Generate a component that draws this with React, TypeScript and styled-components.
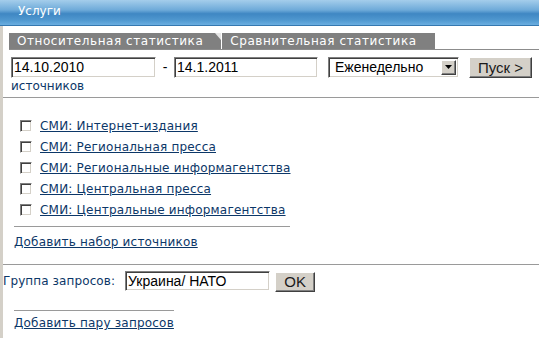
import styled, { createGlobalStyle } from 'styled-components';

const GlobalStyle = createGlobalStyle`
  body {
    margin: 0;
    background: #ffffff;
    font-family: "DejaVu Sans", Verdana, sans-serif;
    font-size: 12px;
  }
`;

const sources = [
  'СМИ: Интернет-издания',
  'СМИ: Региональная пресса',
  'СМИ: Региональные информагентства',
  'СМИ: Центральная пресса',
  'СМИ: Центральные информагентства',
];

export default function App() {
  return (
    <>
      <GlobalStyle />
      <Page>
        <Header>Услуги</Header>
        <Content>
          <TabBar>
            <Tab $corner>Относительная статистика</Tab>
            <Tab>Сравнительная статистика</Tab>
          </TabBar>

          <DateRow>
            <TextInput $width={145} defaultValue="14.10.2010" />
            <Dash>-</Dash>
            <TextInput $width={144} defaultValue="14.1.2011" />
            <Select>
              <SelectValue>Еженедельно</SelectValue>
              <SelectArrow>
                <svg width="7" height="4" viewBox="0 0 7 4">
                  <polygon points="0,0 7,0 3.5,4" fill="#000" />
                </svg>
              </SelectArrow>
            </Select>
            <Button $width={63}>Пуск &gt;</Button>
          </DateRow>

          <Caption>источников</Caption>
          <Divider $top={3} />

          <SourceList>
            {sources.map((s) => (
              <SourceRow key={s}>
                <Checkbox />
                <LinkText href="#">{s}</LinkText>
              </SourceRow>
            ))}
          </SourceList>
          <ShortRule $width={276} $top={6} />
          <AddLink href="#" $top={8}>Добавить набор источников</AddLink>

          <Divider $top={14} />

          <QueryRow>
            <Label>Группа запросов:</Label>
            <TextInput $width={145} $height={20} defaultValue="Украина/ НАТО" />
            <Button $width={40} $height={20} $left={5}>OK</Button>
          </QueryRow>
          <ShortRule $width={160} $top={18} />
          <AddLink href="#" $top={5}>Добавить пару запросов</AddLink>
        </Content>
      </Page>
    </>
  );
}

const Page = styled.div`
  width: 539px;
  height: 338px;
  overflow: hidden;
`;

const Header = styled.div`
  height: 25px;
  border-bottom: 1px solid #3578b0;
  padding-left: 18px;
  line-height: 23px;
  font-size: 12px;
  color: #ffffff;
  background: linear-gradient(
    #a4cdeb 0%,
    #6eaad9 40%,
    #3f87c3 55%,
    #4f97cf 80%,
    #6aaee0 100%
  );
`;

const Content = styled.div`
  border-left: 3px solid #d4d0c8;
  height: 312px;
  padding-top: 7px;
`;

const TabBar = styled.div`
  display: flex;
  margin-left: 6px;
  border-bottom: 1px solid #8c8c8c;
`;

const Tab = styled.div<{ $corner?: boolean }>`
  position: relative;
  height: 16px;
  line-height: 17px;
  padding: 0 18px 0 8px;
  margin-right: ${(p) => (p.$corner ? '1px' : '0')};
  background: #808080;
  color: #ffffff;
  font-size: 12px;
  letter-spacing: 0.55px;
  white-space: nowrap;

  &::after {
    content: '';
    display: ${(p) => (p.$corner ? 'block' : 'none')};
    position: absolute;
    top: 0;
    right: 0;
    width: 0;
    height: 0;
    border-top: 7px solid #e6e6e6;
    border-left: 6px solid transparent;
  }
`;

const DateRow = styled.div`
  display: flex;
  align-items: center;
  margin: 6px 0 0 8px;
  height: 22px;
`;

const TextInput = styled.input<{ $width: number; $height?: number }>`
  box-sizing: border-box;
  width: ${(p) => p.$width}px;
  height: ${(p) => p.$height ?? 21}px;
  padding: 0 0 0 2px;
  margin: 0;
  border: 1px solid;
  border-color: #808080 #ffffff #ffffff #808080;
  box-shadow: inset 1px 1px 0 #404040, inset -1px -1px 0 #d4d0c8;
  font-family: "Liberation Sans", Arial, sans-serif;
  font-size: 14px;
  color: #000000;
  outline: none;
`;

const Dash = styled.span`
  width: 18px;
  text-align: center;
  font-family: "Liberation Sans", Arial, sans-serif;
  font-size: 14px;
`;

const Select = styled.div`
  box-sizing: border-box;
  display: flex;
  align-items: center;
  width: 131px;
  height: 21px;
  margin-left: 10px;
  border: 1px solid;
  border-color: #808080 #ffffff #ffffff #808080;
  box-shadow: inset 1px 1px 0 #404040, inset -1px -1px 0 #d4d0c8;
  padding: 2px;
`;

const SelectValue = styled.span`
  flex: 1;
  padding-left: 4px;
  font-family: "Liberation Sans", Arial, sans-serif;
  font-size: 14px;
`;

const SelectArrow = styled.span`
  box-sizing: border-box;
  display: flex;
  align-items: center;
  justify-content: center;
  width: 15px;
  height: 15px;
  background: #d4d0c8;
  border: 1px solid;
  border-color: #ffffff #404040 #404040 #ffffff;
  box-shadow: inset -1px -1px 0 #808080;
`;

const Button = styled.button<{ $width: number; $height?: number; $left?: number }>`
  box-sizing: border-box;
  width: ${(p) => p.$width}px;
  height: ${(p) => p.$height ?? 21}px;
  margin: 1px 0 0 ${(p) => p.$left ?? 10}px;
  padding: 0;
  background: #d4d0c8;
  border: 1px solid;
  border-color: #ffffff #404040 #404040 #ffffff;
  box-shadow: inset -1px -1px 0 #808080;
  font-family: "Liberation Sans", Arial, sans-serif;
  font-size: 15px;
  font-weight: 400;
  color: #1a1a1a;
`;

const Caption = styled.div`
  margin: 1px 0 0 8px;
  height: 15px;
  line-height: 15px;
  color: #0c3768;
  font-size: 12px;
`;

const Divider = styled.div<{ $top?: number }>`
  height: 1px;
  margin-top: ${(p) => p.$top ?? 4}px;
  background: #9a9a9a;
`;

const SourceList = styled.div`
  display: flex;
  flex-direction: column;
  margin-top: 17px;
`;

const SourceRow = styled.div`
  display: flex;
  align-items: center;
  height: 21px;
  padding-left: 17px;
`;

const Checkbox = styled.span`
  box-sizing: border-box;
  width: 12px;
  height: 12px;
  margin-right: 8px;
  background: #ffffff;
  border: 1px solid;
  border-color: #808080 #ffffff #ffffff #808080;
  box-shadow: inset 1px 1px 0 #404040, inset -1px -1px 0 #d4d0c8;
`;

const LinkText = styled.a`
  color: #0c3768;
  font-size: 12px;
  letter-spacing: 0.2px;
  text-decoration: underline;
`;

const ShortRule = styled.div<{ $width: number; $top?: number }>`
  width: ${(p) => p.$width}px;
  height: 1px;
  margin: ${(p) => p.$top ?? 4}px 0 0 11px;
  background: #9a9a9a;
`;

const AddLink = styled.a<{ $top?: number }>`
  display: block;
  width: max-content;
  margin: ${(p) => p.$top ?? 6}px 0 0 11px;
  color: #0c3768;
  font-size: 12px;
  letter-spacing: 0.2px;
  line-height: 15px;
  text-decoration: underline;
`;

const QueryRow = styled.div`
  display: flex;
  align-items: center;
  margin-top: 5px;
  height: 22px;
`;

const Label = styled.span`
  color: #0c3768;
  font-size: 12px;
  letter-spacing: 0.1px;
  margin-right: 10px;
`;
